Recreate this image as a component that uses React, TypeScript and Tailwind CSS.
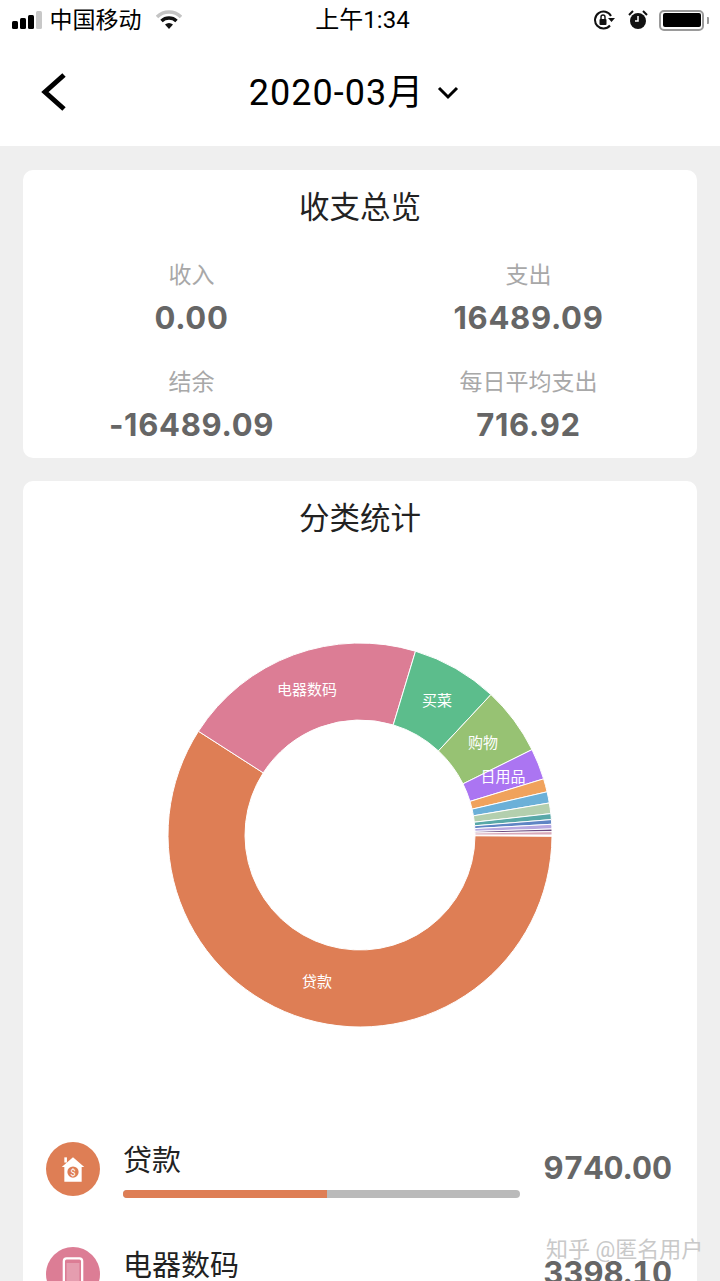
const CJK = "font-['Roboto','Noto_Sans_CJK_SC',sans-serif]";

const SUMMARY = [
  { label: "收入", value: "0.00" },
  { label: "支出", value: "16489.09" },
  { label: "结余", value: "-16489.09" },
  { label: "每日平均支出", value: "716.92" },
];

// angles are clockwise from east, in degrees
const SLICES = [
  { from: 0.4, to: 212.7, color: "#de7e55" },
  { from: 212.7, to: 286.8, color: "#dc7d95" },
  { from: 286.8, to: 313, color: "#5cbd8c" },
  { from: 313, to: 333.6, color: "#97c273" },
  { from: 333.6, to: 343, color: "#ab75f2" },
  { from: 343, to: 347, color: "#f0a25c" },
  { from: 347, to: 350.4, color: "#6bb0d8" },
  { from: 350.4, to: 353.6, color: "#b3cfae" },
  { from: 353.6, to: 355.4, color: "#58a8a8" },
  { from: 355.4, to: 356.8, color: "#5f85c4" },
  { from: 356.8, to: 358.2, color: "#b7a8e0" },
  { from: 358.2, to: 359, color: "#6b4a80" },
  { from: 359, to: 360, color: "#d8a8b8" },
];

const LABELS = [
  { text: "贷款", x: 317, y: 983 },
  { text: "电器数码", x: 307, y: 691 },
  { text: "买菜", x: 437, y: 702 },
  { text: "购物", x: 483, y: 744 },
  { text: "日用品", x: 503, y: 778 },
];

const CX = 360;
const CY = 835;

function pt(r: number, deg: number) {
  const a = (deg * Math.PI) / 180;
  return `${(CX + r * Math.cos(a)).toFixed(2)} ${(CY + r * Math.sin(a)).toFixed(2)}`;
}

function slicePath(from: number, to: number) {
  const R = 192;
  const r = 115;
  const large = to - from > 180 ? 1 : 0;
  return `M${pt(R, from)} A${R} ${R} 0 ${large} 1 ${pt(R, to)} L${pt(r, to)} A${r} ${r} 0 ${large} 0 ${pt(r, from)} Z`;
}

function StatusBar() {
  return (
    <div className="flex h-[40px] items-center justify-between pl-[12px] pr-[11px] text-black">
      <div className="flex w-[204px] items-center">
        <div className="flex items-end gap-[2.5px]">
          <span className="h-[8px] w-[5.5px] rounded-[1.5px] bg-black" />
          <span className="h-[11px] w-[5.5px] rounded-[1.5px] bg-black" />
          <span className="h-[14px] w-[5.5px] rounded-[1.5px] bg-black" />
          <span className="h-[18px] w-[5.5px] rounded-[1.5px] bg-[#c8c8c8]" />
        </div>
        <span className="ml-[8px] text-[23px] leading-none">中国移动</span>
        <svg className="ml-[14px]" width="26" height="20" viewBox="0 0 26 20">
          <path d="M1 7 A17 17 0 0 1 25 7" fill="none" stroke="#c4c4c4" strokeWidth="3.5" />
          <path d="M5.500 11 A11 11 0 0 1 20.500 11" fill="none" stroke="#111" strokeWidth="3.5" />
          <path d="M9 14.500 L13 19 L17 14.500 A6 6 0 0 0 9 14.500 Z" fill="#111" />
        </svg>
      </div>
      <span className="text-[24px] leading-none">上午1:34</span>
      <div className="flex w-[200px] items-center justify-end">
        <svg width="21" height="22" viewBox="0 0 21 22">
          <path d="M16 16.500 A8.500 8.500 0 1 1 17 7" fill="none" stroke="#111" strokeWidth="2" />
          <path d="M14 9 L21 9 L17.500 13 Z" fill="#111" />
          <rect x="5.500" y="10" width="7" height="6" rx="1" fill="#111" />
          <path d="M7 10 V8 A2 2 0 0 1 11 8 V10" fill="none" stroke="#111" strokeWidth="1.4" />
        </svg>
        <svg className="ml-[13px]" width="20" height="22" viewBox="0 0 20 22">
          <circle cx="10" cy="12" r="8" fill="#111" />
          <path d="M10 7 V12 H7" fill="none" stroke="#fff" strokeWidth="1.5" />
          <path d="M1 6 L5 2 M19 6 L15 2" stroke="#111" strokeWidth="2" />
        </svg>
        <div className="ml-[11px] flex items-center">
          <div className="flex h-[21px] w-[45px] items-center rounded-[5px] border-2 border-[#9a9a9a] p-[1.5px]">
            <div className="h-full w-full rounded-[2px] bg-black" />
          </div>
          <span className="ml-[3px] h-[7px] w-[2px] rounded-r-[1px] bg-[#9a9a9a]" />
        </div>
      </div>
    </div>
  );
}

function Header() {
  return (
    <div className="relative flex h-[106px] items-center justify-center pr-[11px]">
      <svg className="absolute left-[40px] top-[32px]" width="28" height="40" viewBox="0 0 28 40">
        <path d="M24 3 L5 20 L24 37" fill="none" stroke="#000" strokeWidth="5" />
      </svg>
      <span className="text-[36px] leading-none tracking-[1px] text-black">2020-03月</span>
      <svg className="ml-[12px]" width="24" height="16" viewBox="0 0 24 16">
        <path d="M3 3 L12 12 L21 3" fill="none" stroke="#000" strokeWidth="3" />
      </svg>
    </div>
  );
}

function Overview() {
  return (
    <section className="h-[288px] rounded-[10px] bg-white">
      <h2 className="pt-[18px] text-center text-[30.5px] leading-[40px] text-[#222]">收支总览</h2>
      <div className="mt-[35px] grid grid-cols-2 gap-y-[33px]">
        {SUMMARY.map((item) => (
          <div key={item.label} className="flex flex-col items-center">
            <span className="text-[23px] leading-[26px] text-[#a8a8a8]">{item.label}</span>
            <span className="mt-[10px] font-['Inter',sans-serif] text-[31px] font-bold leading-[38px] tracking-[0.7px] text-[#666]">
              {item.value}
            </span>
          </div>
        ))}
      </div>
    </section>
  );
}

function Donut() {
  return (
    <svg className="absolute left-[-23px] top-[-481px]" width="720" height="1281" viewBox="0 0 720 1281">
      {SLICES.map((s) => (
        <path key={s.from} d={slicePath(s.from, s.to)} fill={s.color} stroke="#fff" strokeWidth="1" />
      ))}
      {LABELS.map((l) => (
        <text key={l.text} x={l.x} y={l.y} fill="#fff" fontSize="15" textAnchor="middle" dominantBaseline="middle">
          {l.text}
        </text>
      ))}
    </svg>
  );
}

function Row({ name, amount, color, pct, icon }: { name: string; amount: string; color: string; pct: number; icon: React.ReactNode }) {
  return (
    <div className="flex h-[105px] items-start pl-[23px] pr-[25px]">
      <div className="mt-[2px] flex h-[54px] w-[54px] shrink-0 items-center justify-center rounded-full" style={{ backgroundColor: color }}>
        {icon}
      </div>
      <div className="ml-[23px] w-[397px]">
        <div className="mt-[3px] text-[29px] leading-[36px] text-[#222]">{name}</div>
        <div className="mt-[11px] h-[8px] overflow-hidden rounded-full bg-[#bababa]">
          <div className="h-full" style={{ width: `${pct}%`, backgroundColor: color }} />
        </div>
      </div>
      <div className="ml-auto mt-[9px] font-['Inter',sans-serif] text-[31px] font-bold leading-[38px] tabular-nums text-[#666]">{amount}</div>
    </div>
  );
}

export default function App() {
  return (
    <div className={`relative h-[1281px] w-[720px] overflow-hidden bg-[#efefef] ${CJK}`}>
      <div className="bg-white">
        <StatusBar />
        <Header />
      </div>

      <div className="flex flex-col gap-[23px] px-[23px] pt-[24px]">
        <Overview />

        <section className="relative h-[900px] rounded-[10px] bg-white">
          <h2 className="pt-[18px] text-center text-[30.5px] leading-[40px] text-[#222]">分类统计</h2>
          <Donut />
          <div className="absolute inset-x-0 top-[659px]">
            <Row
              name="贷款"
              amount="9740.00"
              color="#de7e55"
              pct={51.4}
              icon={
                <svg width="26" height="31" viewBox="0 0 30 34">
                  <path d="M15 3 L28 14 H25 V31 H5 V14 H2 Z" fill="#fff" />
                  <rect x="5" y="3" width="3" height="6" fill="#fff" />
                  <circle cx="15" cy="20" r="6.500" fill="#de7e55" />
                  <text x="15" y="24" fontSize="11" fill="#fff" textAnchor="middle">$</text>
                </svg>
              }
            />
            <Row
              name="电器数码"
              amount="3398.10"
              color="#dc7d95"
              pct={18}
              icon={
                <svg width="22" height="38" viewBox="0 0 24 38">
                  <rect x="2" y="2" width="20" height="34" rx="3" fill="none" stroke="#fff" strokeWidth="2.500" />
                  <rect x="5" y="7" width="14" height="24" fill="#fff" fillOpacity="0.25" />
                </svg>
              }
            />
          </div>
        </section>
      </div>

      <span className="absolute left-[546px] top-[1236px] text-[22px] leading-[28px] text-[#c9c9c9]">知乎 @匿名用户</span>
    </div>
  );
}
